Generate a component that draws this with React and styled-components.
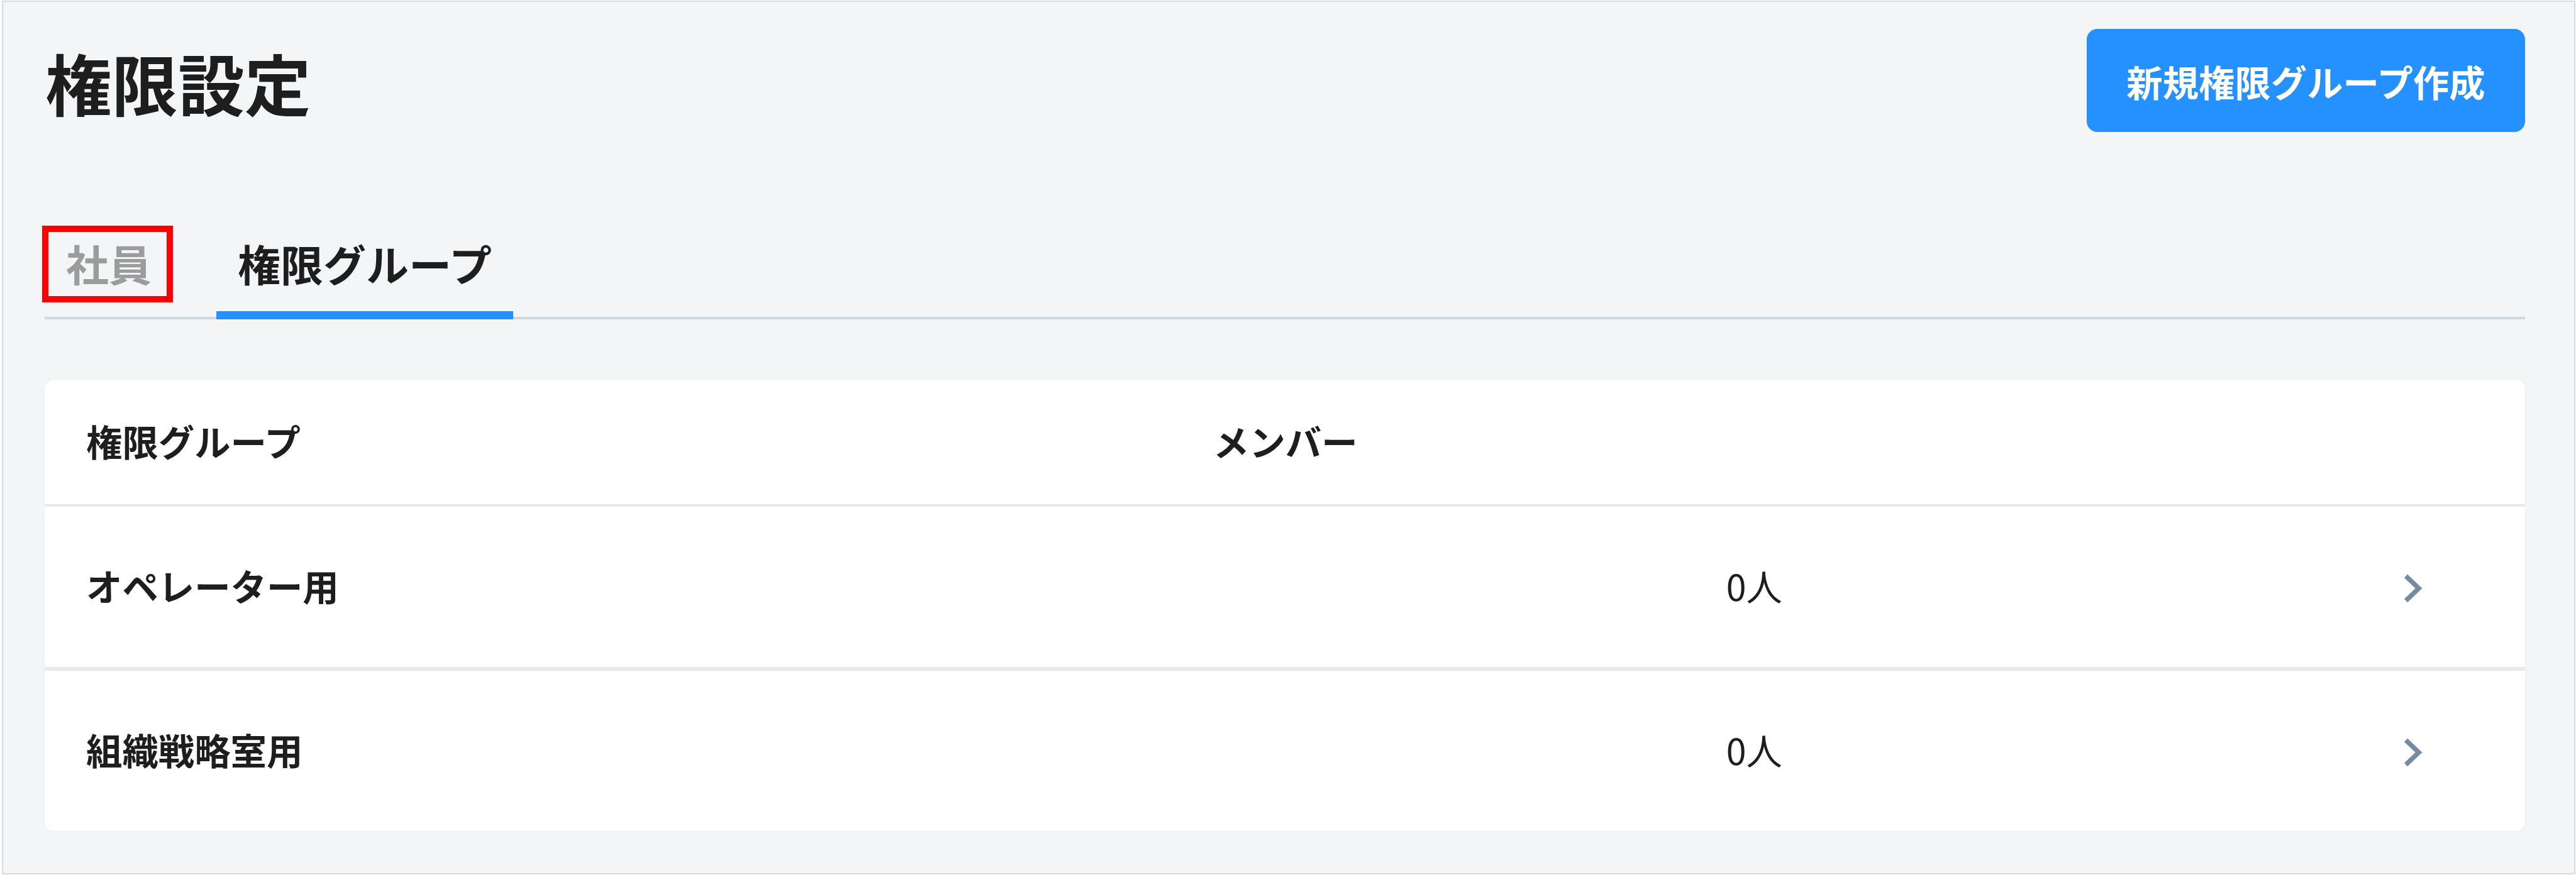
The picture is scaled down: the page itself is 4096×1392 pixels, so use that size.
import styled, { createGlobalStyle } from "styled-components"

const GlobalStyle = createGlobalStyle`
    * {
        box-sizing: border-box;
    }

    body {
        margin: 0;
        background-color: #fff;
        color: #1e1e1e;
        font-family: "Noto Sans CJK JP", sans-serif;
    }
`

const Container = styled.div`
    width: 4092px;
    height: 1390px;
    margin: 1px 0 0 3px;
    padding: 43px 78px 0 66px;
    background-color: #f3f5f7;
    border: 2px solid #d9dbdb;
`

const Header = styled.header`
    display: flex;
    justify-content: space-between;
    align-items: flex-start;
    height: 288px;
`

const Title = styled.h1`
    margin: 9px 0 0 1px;
    font-size: 105.6px;
    font-weight: 700;
    line-height: 150px;
`

const Button = styled.button`
    width: 697px;
    height: 164px;
    padding: 2px 0 0;
    border: none;
    border-radius: 17px;
    background-color: #2491ff;
    color: #fff;
    font-family: inherit;
    font-size: 57.4px;
    font-weight: 700;
    white-space: nowrap;
`

const Tabs = styled.nav`
    display: flex;
    gap: 69px;
    height: 174px;
    border-bottom: 4px solid #cfd7df;
`

const Tab = styled.div`
    position: relative;
    height: 174px;
    padding: 35px 34px 0;
    border-bottom: 13px solid ${props => props.$active ? "#2491ff" : "transparent"};
    color: ${props => props.$active ? "#1e1e1e" : "#9c9c9c"};
    font-size: 68px;
    font-weight: 700;
    line-height: 99px;
    white-space: nowrap;
`

const Highlight = styled.span`
    position: absolute;
    top: 25px;
    left: -4px;
    width: 208px;
    height: 122px;
    border: 10px solid #ff0000;
`

const Table = styled.div`
    margin-top: 96px;
    border-radius: 15px;
    background-color: #fff;
    box-shadow: 0 0 5px rgba(0, 0, 0, 0.03);
`

const Row = styled.div`
    display: grid;
    grid-template-columns: 1792px 1fr 377px;
    align-items: center;
    height: ${props => props.$height}px;
    padding-left: 66px;
    border-bottom: ${props => props.$line || 0}px solid #e6eaee;
    font-size: 57.4px;
    line-height: 84px;
`

const Name = styled.div`
    padding-bottom: 5px;
    font-weight: 700;
`

const Count = styled.div`
    padding: 0 804px 5px 0;
    text-align: right;
`

const Arrow = styled.svg`
    display: block;
    width: 30px;
    height: 46px;
    margin: 4px 0 0 184px;
    fill: none;
    stroke: #768ba0;
    stroke-width: 7.5;
`

const groups = [
    { name: "オペレーター用", count: 0, height: 261, line: 6 },
    { name: "組織戦略室用", count: 0, height: 255, line: 0 },
]

function App() {
    return (
        <>
            <GlobalStyle />
            <Container>
                <Header>
                    <Title>権限設定</Title>
                    <Button>新規権限グループ作成</Button>
                </Header>
                <Tabs>
                    <Tab>社員<Highlight /></Tab>
                    <Tab $active>権限グループ</Tab>
                </Tabs>
                <Table>
                    <Row $height={202} $line={4}>
                        <Name>権限グループ</Name>
                        <Name>メンバー</Name>
                    </Row>
                    {groups.map(group => (
                        <Row key={group.name} $height={group.height} $line={group.line}>
                            <Name>{group.name}</Name>
                            <Count>{group.count}人</Count>
                            <Arrow viewBox="0 0 30 46">
                                <path d="M3.5 3.5 L24 23 L3.5 42.5" />
                            </Arrow>
                        </Row>
                    ))}
                </Table>
            </Container>
        </>
    )
}

export default App
